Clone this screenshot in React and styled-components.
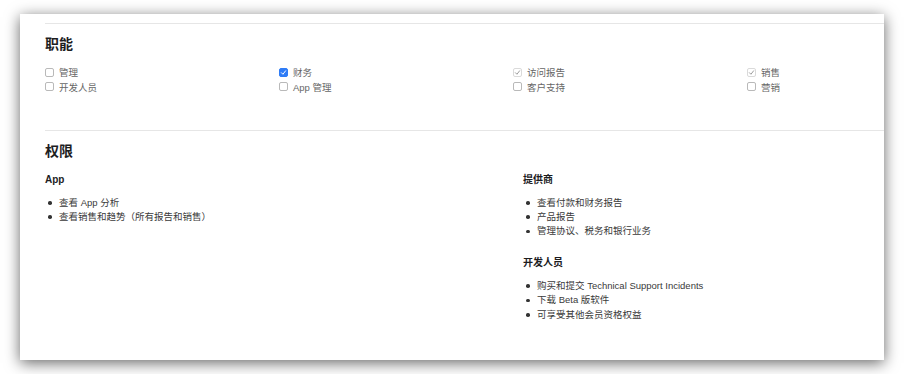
import React from "react";
import styled, { createGlobalStyle } from "styled-components";

const GlobalStyle = createGlobalStyle`
  html, body {
    margin: 0;
    padding: 0;
    background: #ffffff;
  }
  body {
    font-family: "Liberation Sans", "Noto Sans CJK SC", sans-serif;
    -webkit-font-smoothing: antialiased;
  }
`;

const roles = [
  { label: "管理", state: "off" },
  { label: "财务", state: "on" },
  { label: "访问报告", state: "locked" },
  { label: "销售", state: "locked" },
  { label: "开发人员", state: "off" },
  { label: "App 管理", state: "off" },
  { label: "客户支持", state: "off" },
  { label: "营销", state: "off" },
];

const permissions = [
  [
    {
      title: "App",
      items: ["查看 App 分析", "查看销售和趋势（所有报告和销售）"],
    },
  ],
  [
    {
      title: "提供商",
      items: ["查看付款和财务报告", "产品报告", "管理协议、税务和银行业务"],
    },
    {
      title: "开发人员",
      items: [
        "购买和提交 Technical Support Incidents",
        "下载 Beta 版软件",
        "可享受其他会员资格权益",
      ],
    },
  ],
];

const Check = ({ state }) => (
  <Box $state={state}>
    {state !== "off" && (
      <svg width="7" height="7" viewBox="0 0 10 10">
        <path
          d="M2 5.3 L4.2 7.5 L8 2.6"
          fill="none"
          stroke={state === "on" ? "#ffffff" : "#9a9a9a"}
          strokeWidth="1.4"
          strokeLinecap="round"
          strokeLinejoin="round"
        />
      </svg>
    )}
  </Box>
);

const App = () => {
  return (
    <>
      <GlobalStyle />
      <Stage>
        <Panel>
          <Section $bottom={36}>
            <Heading>职能</Heading>
            <RoleGrid>
              {roles.map((r) => (
                <RoleItem key={r.label}>
                  <Check state={r.state} />
                  <span>{r.label}</span>
                </RoleItem>
              ))}
            </RoleGrid>
          </Section>
          <Section $bottom={30}>
            <Heading>权限</Heading>
            <PermGrid>
              {permissions.map((col, i) => (
                <PermColumn key={i}>
                  {col.map((group) => (
                    <Group key={group.title}>
                      <GroupTitle>{group.title}</GroupTitle>
                      <BulletList>
                        {group.items.map((t) => (
                          <Bullet key={t}>{t}</Bullet>
                        ))}
                      </BulletList>
                    </Group>
                  ))}
                </PermColumn>
              ))}
            </PermGrid>
          </Section>
        </Panel>
      </Stage>
    </>
  );
};

const Stage = styled.div`
  width: 904px;
  height: 374px;
  padding: 14px 20px 0 20px;
  box-sizing: border-box;
`;

const Panel = styled.div`
  width: 864px;
  height: 346px;
  background: #fff;
  overflow: hidden;
  box-shadow: 0 3px 14px rgba(0, 0, 0, 0.6);
  padding: 9px 0 0 25px;
  box-sizing: border-box;
`;

const Section = styled.section`
  border-top: 1px solid #e6e6e6;
  padding-top: 9px;
  width: 960px;
  padding-bottom: ${(p) => p.$bottom}px;
`;

const Heading = styled.h2`
  margin: 0 0 10px 0;
  font-size: 14px;
  line-height: 22px;
  font-weight: 600;
  color: #1d1d1f;
`;

const RoleGrid = styled.div`
  display: grid;
  grid-template-columns: repeat(4, 234px);
  row-gap: 0.5px;
`;

const RoleItem = styled.label`
  display: flex;
  align-items: center;
  gap: 5px;
  height: 14px;
  font-size: 9.5px;
  color: #666666;
`;

const Box = styled.span`
  width: 9px;
  height: 9px;
  box-sizing: border-box;
  border-radius: 2px;
  border: 1px solid
    ${(p) => (p.$state === "on" ? "#2f7cf6" : p.$state === "locked" ? "#dadada" : "#b9b9b9")};
  background: ${(p) => (p.$state === "on" ? "#2f7cf6" : "#fff")};
  display: flex;
  align-items: center;
  justify-content: center;
  flex-shrink: 0;
`;

const PermGrid = styled.div`
  display: grid;
  grid-template-columns: 478px 478px;
  padding-top: 1px;
`;

const PermColumn = styled.div`
  display: flex;
  flex-direction: column;
  gap: 17px;
`;

const Group = styled.div``;

const GroupTitle = styled.h3`
  margin: 0 0 9px 0;
  font-size: 10px;
  line-height: 14px;
  font-weight: 600;
  color: #1d1d1f;
`;

const BulletList = styled.ul`
  list-style: none;
  margin: 0;
  padding: 0;
`;

const Bullet = styled.li`
  position: relative;
  padding-left: 14px;
  font-size: 9.5px;
  line-height: 14.4px;
  color: #3a3a3a;

  &::before {
    content: "";
    position: absolute;
    left: 3px;
    top: 5.5px;
    width: 3.5px;
    height: 3.5px;
    border-radius: 50%;
    background: #333;
  }
`;

export default App;
